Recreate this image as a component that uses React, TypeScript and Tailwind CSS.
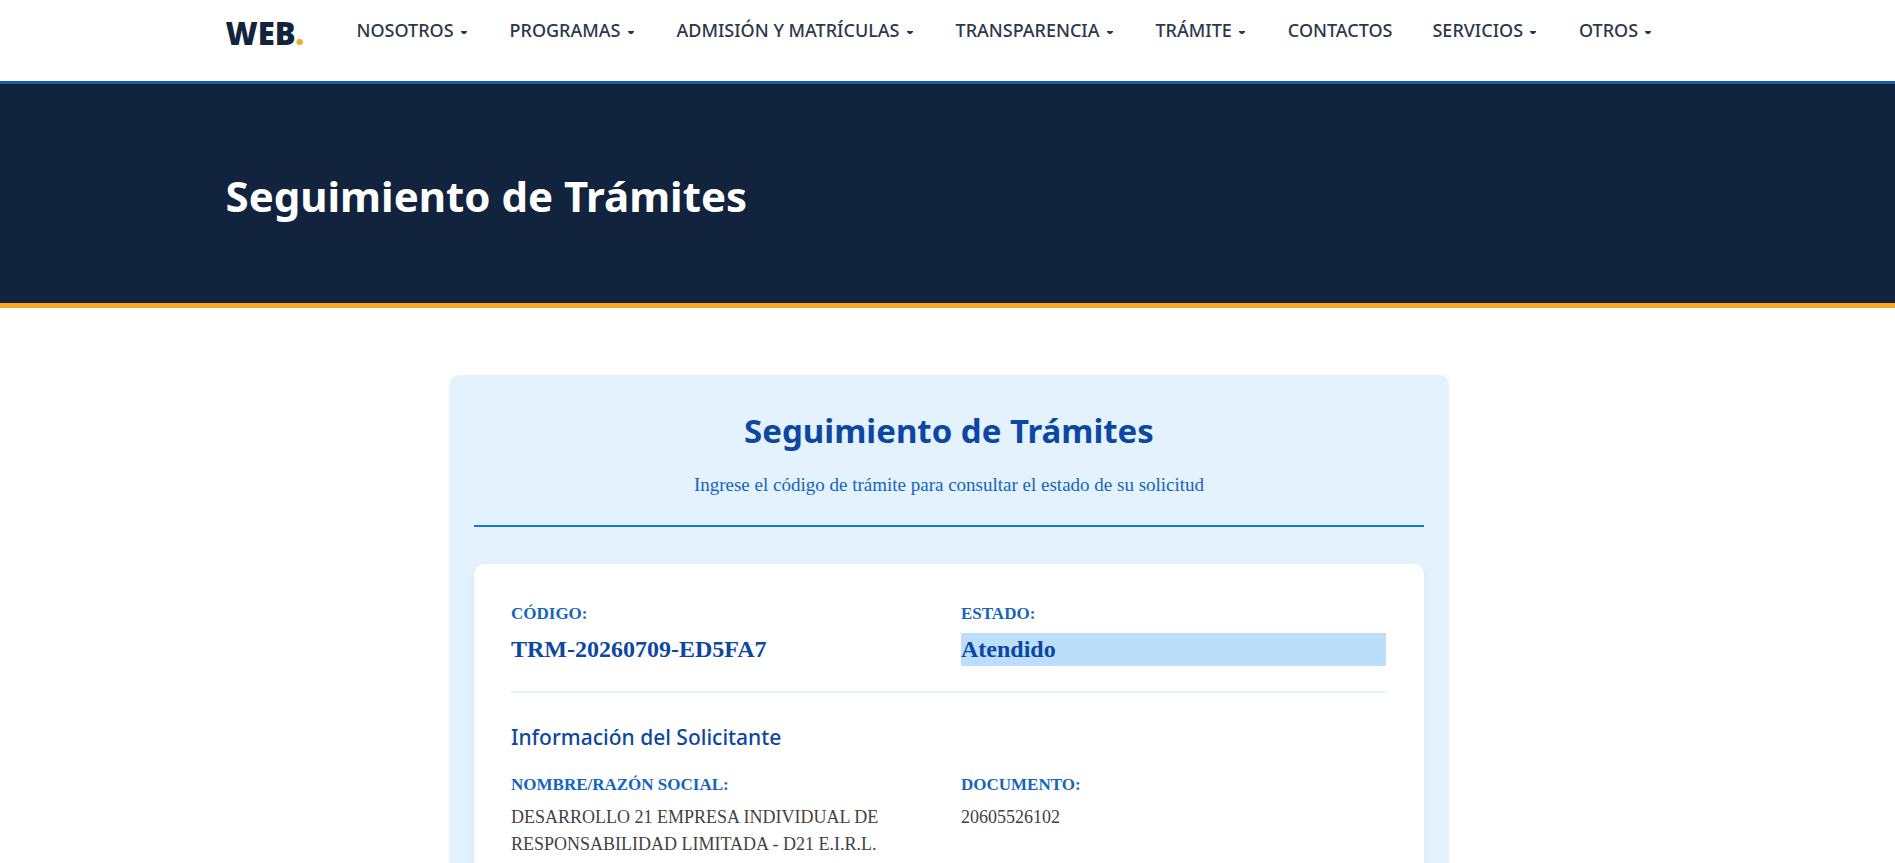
import type { ReactNode } from 'react';

type NavItem = { label: string; hasMenu: boolean };

const navItems: NavItem[] = [
  { label: 'NOSOTROS', hasMenu: true },
  { label: 'PROGRAMAS', hasMenu: true },
  { label: 'ADMISIÓN Y MATRÍCULAS', hasMenu: true },
  { label: 'TRANSPARENCIA', hasMenu: true },
  { label: 'TRÁMITE', hasMenu: true },
  { label: 'CONTACTOS', hasMenu: false },
  { label: 'SERVICIOS', hasMenu: true },
  { label: 'OTROS', hasMenu: true },
];

function Caret() {
  return (
    <svg className="mt-1 mr-[3px] h-[3px] w-[6px]" viewBox="0 0 6 3" fill="currentColor" aria-hidden="true">
      <path d="M0 0h6v1L4 3H2L0 1z" />
    </svg>
  );
}

function Header() {
  return (
    <header className="border-b-3 border-[#1a5fad] bg-white">
      <div className="mx-auto flex h-[81px] max-w-[1444px] items-start">
        <a href="#inicio" className="mt-3 w-[131px] shrink-0 text-[31px] leading-[42px] font-black text-[#12233d]">
          WEB<span className="text-[#f9a826]">.</span>
        </a>
        <nav aria-label="Principal" className="mt-4">
          <ul className="flex gap-10">
            {navItems.map((item) => (
              <li key={item.label}>
                <a
                  href="#"
                  className="flex items-center gap-[7px] text-[18px] leading-[28px] font-medium whitespace-nowrap text-[#2d3748]"
                >
                  {item.label}
                  {item.hasMenu && <Caret />}
                </a>
              </li>
            ))}
          </ul>
        </nav>
      </div>
    </header>
  );
}

function Field({ label, children }: { label: string; children: ReactNode }) {
  return (
    <div>
      <dt className="text-[17px] leading-[26px] font-bold text-[#1565c0]">{label}</dt>
      {children}
    </div>
  );
}

export default function App() {
  return (
    <div className="h-screen overflow-hidden bg-white font-['Noto_Sans',sans-serif]">
      <Header />
      <section className="border-b-5 border-[#f9a826] bg-[#12233d]">
        <div className="mx-auto max-w-[1444px] pt-[79px] pb-[75px]">
          <h1 className="text-[42px] leading-[65px] font-bold text-white">Seguimiento de Trámites</h1>
        </div>
      </section>
      <main className="pt-[67px] pl-[3px]">
        <section className="mx-auto max-w-[1000px] rounded-[10px] bg-[#e3f2fd] px-[25px] pt-[25px] pb-10">
          <div className="border-b-2 border-[#1976d2] pb-[26px] text-center">
            <h2 className="pt-[9px] text-[33px] leading-[44px] font-bold text-[#0d47a1]">
              Seguimiento de Trámites
            </h2>
            <p className="mt-[18px] font-['Liberation_Serif',serif] text-[19px] leading-[28px] text-[#1565c0]">
              Ingrese el código de trámite para consultar el estado de su solicitud
            </p>
          </div>
          <div className="mt-[37px] rounded-[10px] bg-white pt-[37px] pr-[38px] pb-10 pl-[37px] shadow-[0_4px_8px_rgba(25,118,210,0.1)]">
            <dl className="grid grid-cols-2 gap-x-[25px] border-b-2 border-[#e3f2fd] pb-[25px] font-['Liberation_Serif',serif]">
              <Field label="CÓDIGO:">
                <dd className="mt-[6px] text-[24px] leading-[33px] font-bold text-[#0d47a1]">TRM-20260709-ED5FA7</dd>
              </Field>
              <Field label="ESTADO:">
                <dd className="mt-[6px] bg-[#bbdefb] text-[24px] leading-[33px] font-bold text-[#0d47a1]">Atendido</dd>
              </Field>
            </dl>
            <h3 className="mt-7 text-[21px] leading-[32px] font-medium text-[#0d47a1]">
              Información del Solicitante
            </h3>
            <dl className="mt-[19px] grid grid-cols-2 gap-x-[25px] font-['Liberation_Serif',serif]">
              <Field label="NOMBRE/RAZÓN SOCIAL:">
                <dd className="mt-[6px] text-[18px] leading-[27px] text-[#424242]">
                  DESARROLLO 21 EMPRESA INDIVIDUAL DE RESPONSABILIDAD LIMITADA - D21 E.I.R.L.
                </dd>
              </Field>
              <Field label="DOCUMENTO:">
                <dd className="mt-[6px] text-[18px] leading-[27px] text-[#424242]">20605526102</dd>
              </Field>
            </dl>
          </div>
        </section>
      </main>
    </div>
  );
}
